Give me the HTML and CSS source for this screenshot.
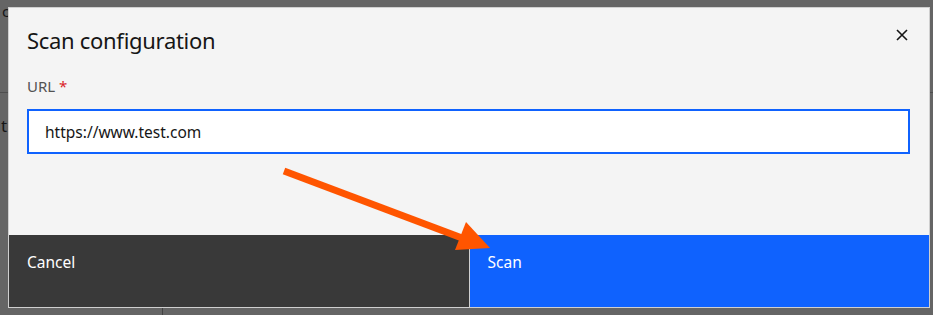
FILE: index.html
```html
<!DOCTYPE html>
<html lang="en">
<head>
    <meta charset="UTF-8">
    <meta name="viewport" content="width=device-width, initial-scale=1.0">
    <title>Scan configuration</title>
    <link rel="stylesheet" href="styles.css">
</head>
<body>
    <div class="page">
        <div class="page-date"><span>c</span><span class="page-year">2022</span></div>
        <div class="page-rule"></div>
        <div class="page-row">t</div>
        <div class="page-bottom"><div class="page-col"></div></div>
    </div>

    <div class="overlay">
        <div class="modal">
            <div class="modal-header">
                <h2 class="modal-title">Scan configuration</h2>
                <button class="modal-close" aria-label="Close">
                    <svg viewBox="0 0 12 12" width="12" height="12">
                        <path d="M1 1 L11 11 M11 1 L1 11" stroke="#161616" stroke-width="1.6" fill="none" />
                    </svg>
                </button>
            </div>
            <div class="modal-body">
                <label class="field-label" for="url">URL <span class="required">*</span></label>
                <input type="text" id="url" class="field-input" value="https://www.test.com">
            </div>
            <div class="modal-footer">
                <button class="btn btn-secondary">Cancel</button>
                <button class="btn btn-primary">Scan</button>
            </div>
        </div>
    </div>

    <svg class="annotation" viewBox="0 0 933 315" width="933" height="315">
        <line x1="284" y1="171" x2="462" y2="238" stroke="#ff5500" stroke-width="7" />
        <polygon points="466,222 455,250 490,248" fill="#ff5500" />
    </svg>
</body>
</html>
```

FILE: styles.css
```css
html, body {
    margin: 0;
    height: 100%;
}

body {
    position: relative;
    width: 933px;
    height: 315px;
    overflow: hidden;
    background: #ffffff;
    font-family: "Noto Sans", "Open Sans", sans-serif;
}

.page {
    height: 315px;
    display: flex;
    flex-direction: column;
    color: #1a1a1a;
}

.page-date {
    display: flex;
    gap: 26px;
    margin-left: 2px;
    margin-top: 1px;
    font-size: 15px;
    line-height: 20px;
}

.page-rule {
    margin-top: 71px;
    height: 1px;
    background: #bbbbbb;
}

.page-row {
    margin-top: 22px;
    margin-left: 1px;
    font-size: 17px;
    line-height: 22px;
}

.page-bottom {
    margin-top: auto;
    height: 8px;
    display: flex;
}

.page-col {
    margin-left: 162px;
    width: 1px;
    background: #999999;
}

.overlay {
    position: absolute;
    inset: 0;
    background: rgba(22, 22, 22, 0.66);
}

.modal {
    position: absolute;
    top: 7px;
    left: 8px;
    width: 920px;
    height: 299px;
    border: 1px solid #cfcfcf;
    background: #f4f4f4;
    display: flex;
    flex-direction: column;
}

.modal-header {
    display: flex;
    justify-content: space-between;
    align-items: flex-start;
    padding: 0 0 0 18px;
}

.modal-title {
    margin: 17px 0 0;
    font-size: 22px;
    font-weight: 400;
    line-height: 30px;
    letter-spacing: -0.3px;
    color: #161616;
}

.modal-close {
    margin: 13px 13px 0 0;
    width: 28px;
    height: 28px;
    padding: 0;
    border: none;
    background: transparent;
    display: flex;
    align-items: center;
    justify-content: center;
}

.modal-body {
    padding: 21px 19px 0 18px;
    display: flex;
    flex-direction: column;
}

.field-label {
    font-size: 15px;
    line-height: 20px;
    color: #525252;
}

.required {
    color: #da1e28;
}

.field-input {
    margin-top: 13px;
    height: 45px;
    box-sizing: border-box;
    border: 2px solid #0f62fe;
    background: #ffffff;
    padding: 0 16px;
    font-family: inherit;
    font-size: 15.5px;
    color: #161616;
    outline: none;
}

.modal-footer {
    margin-top: auto;
    height: 72px;
    display: flex;
    gap: 1px;
    background: #cfcfcf;
}

.btn {
    flex: 1;
    border: none;
    padding: 17px 18px 0;
    text-align: left;
    align-self: stretch;
    display: flex;
    align-items: flex-start;
    font-family: inherit;
    font-size: 15.5px;
    line-height: 20px;
    color: #ffffff;
}

.btn-secondary {
    background: #393939;
}

.btn-primary {
    background: #0f62fe;
}

.annotation {
    position: absolute;
    top: 0;
    left: 0;
}
```
